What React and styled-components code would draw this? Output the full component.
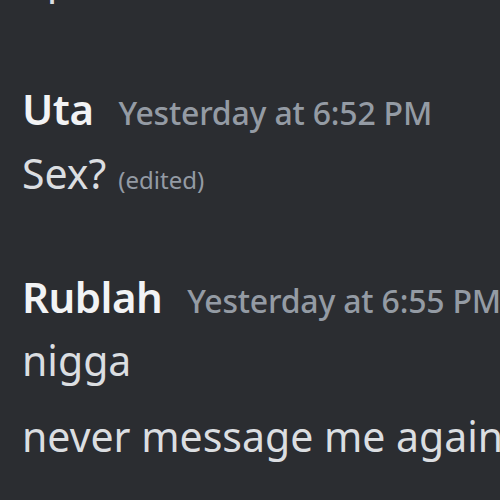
import React from "react";
import styled, { createGlobalStyle } from "styled-components";

const Global = createGlobalStyle`
  html, body {
    margin: 0;
    padding: 0;
    background: #2b2d31;
    overflow: hidden;
  }
  body {
    width: 500px;
    height: 500px;
    font-family: "Noto Sans", "Open Sans", sans-serif;
  }
`;

const Chat = styled.div`
  width: 500px;
  height: 500px;
  overflow: hidden;
  background: #2b2d31;
  padding-left: 22px;
  box-sizing: border-box;
  white-space: nowrap;
`;

const Message = styled.div`
  display: flex;
  flex-direction: column;
  margin-top: ${(p) => p.$gap}px;
`;

const Header = styled.div`
  display: flex;
  align-items: baseline;
  gap: 25px;
  height: 60px;
`;

const Name = styled.span`
  color: #f2f3f5;
  font-size: 42px;
  font-weight: 600;
  letter-spacing: -0.5px;
`;

const Stamp = styled.span`
  color: #949ba4;
  font-size: 32px;
  font-weight: 500;
  letter-spacing: -0.2px;
`;

const Line = styled.div`
  color: #dbdee1;
  font-size: 41px;
  line-height: ${(p) => p.$lh || 70}px;
  display: flex;
  align-items: baseline;
  gap: 12px;
`;

const Edited = styled.span`
  color: #949ba4;
  font-size: 24px;
`;

const Hidden = styled.div`
  color: #dbdee1;
  font-size: 41px;
  line-height: 40px;
  margin-top: -42px;
`;

export default function App() {
  return (
    <>
      <Global />
      <Chat>
        <Hidden>op</Hidden>
        <Message $gap={82}>
          <Header>
            <Name>Uta</Name>
            <Stamp>Yesterday at 6:52 PM</Stamp>
          </Header>
          <Line $lh={66}>
            Sex?<Edited>(edited)</Edited>
          </Line>
        </Message>
        <Message $gap={55}>
          <Header>
            <Name>Rublah</Name>
            <Stamp>Yesterday at 6:55 PM</Stamp>
          </Header>
          <Line $lh={64}>nigga</Line>
          <Line $lh={88}>never message me again</Line>
        </Message>
      </Chat>
    </>
  );
}
